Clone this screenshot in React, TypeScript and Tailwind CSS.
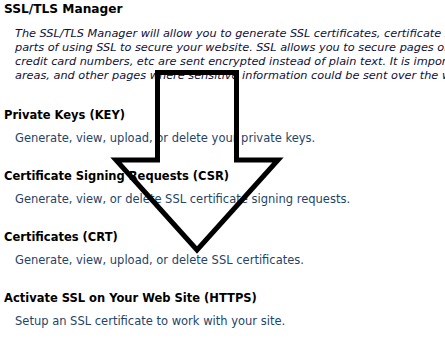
const sections = [
  {
    title: "Private Keys (KEY)",
    desc: "Generate, view, upload, or delete your private keys.",
  },
  {
    title: "Certificate Signing Requests (CSR)",
    desc: "Generate, view, or delete SSL certificate signing requests.",
  },
  {
    title: "Certificates (CRT)",
    desc: "Generate, view, upload, or delete SSL certificates.",
  },
  {
    title: "Activate SSL on Your Web Site (HTTPS)",
    desc: "Setup an SSL certificate to work with your site.",
  },
];

const intro = [
  "The SSL/TLS Manager will allow you to generate SSL certificates, certificate signing requests, and private keys. These are all",
  "parts of using SSL to secure your website. SSL allows you to secure pages on your site so that information such as logins,",
  "credit card numbers, etc are sent encrypted instead of plain text. It is important to secure any log in areas, shopping",
  "areas, and other pages where sensitive information could be sent over the web.",
];

const App = () => {
  return (
    <div className="relative w-[445px] h-[352px] overflow-hidden bg-white font-['DejaVu_Sans',Verdana,sans-serif]">
      <div className="pl-[4px] pt-[1px]">
        <h1 className="text-[12.2px] leading-[16px] font-bold text-black">SSL/TLS Manager</h1>
        <div className="mt-[10px] pl-[11px] text-[11.3px] leading-[14px] italic text-[#10103a] whitespace-nowrap">
          {intro.map((line) => (
            <div key={line}>{line}</div>
          ))}
        </div>
        <div className="mt-[24px] flex flex-col gap-[23px]">
          {sections.map((s) => (
            <div key={s.title}>
              <h2 className="text-[11.5px] leading-[16px] font-bold text-black">{s.title}</h2>
              <p className="mt-[8px] pl-[11px] text-[11.5px] leading-[14px] text-[#1f4468]">{s.desc}</p>
            </div>
          ))}
        </div>
      </div>

      {/* big hand-drawn arrow over the page */}
      <svg className="absolute left-0 top-0" width="445" height="352" viewBox="0 0 445 352">
        <polygon
          points="157.5,72.5 157.5,160 116,160 197,250 278,160 236.5,160 236.5,72.5"
          fill="none"
          stroke="#000"
          strokeWidth="5"
          strokeLinejoin="miter"
        />
      </svg>
    </div>
  );
};

export default App;
